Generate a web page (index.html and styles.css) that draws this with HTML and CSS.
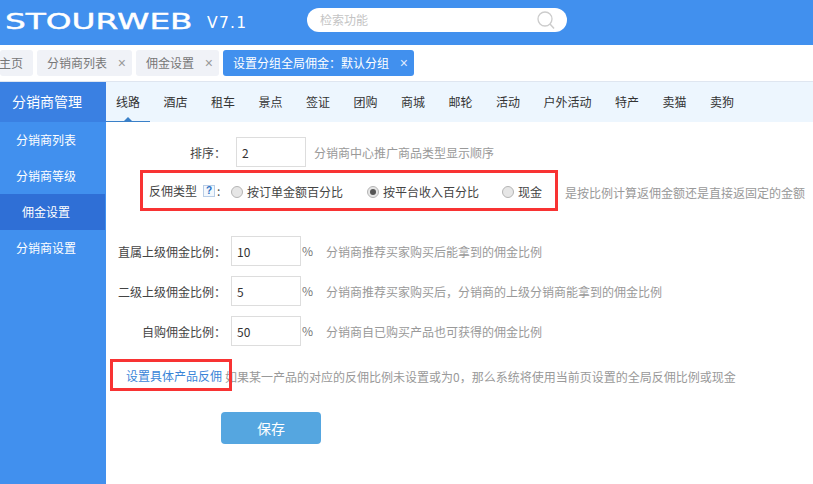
FILE: index.html
```html
<!DOCTYPE html>
<html lang="zh">
<head>
<meta charset="utf-8">
<title>佣金设置</title>
<link rel="stylesheet" href="styles.css">
</head>
<body>
<header class="top">
  <div class="logo"><span class="logo-name">STOURWEB</span><span class="logo-ver">V7.1</span></div>
  <div class="search">
    <span class="search-text">检索功能</span>
    <svg class="search-icon" width="18" height="19" viewBox="0 0 18 19"><circle cx="8" cy="8" r="7" fill="none" stroke="#ccc" stroke-width="1.3"/><path d="M13 13l4 4.5" stroke="#ccc" stroke-width="1.5" fill="none"/></svg>
  </div>
</header>
<div class="tabs">
  <div class="tab tab-home">主页</div>
  <div class="tab">分销商列表<span class="close">×</span></div>
  <div class="tab">佣金设置<span class="close">×</span></div>
  <div class="tab tab-on">设置分组全局佣金：默认分组<span class="close">×</span></div>
</div>
<div class="main">
  <aside class="side">
    <div class="side-title">分销商管理</div>
    <div class="side-item">分销商列表</div>
    <div class="side-item">分销商等级</div>
    <div class="side-item side-on">佣金设置</div>
    <div class="side-item">分销商设置</div>
  </aside>
  <section class="content">
    <nav class="nav">
      <span class="nav-item nav-on">线路</span>
      <span class="nav-item">酒店</span>
      <span class="nav-item">租车</span>
      <span class="nav-item">景点</span>
      <span class="nav-item">签证</span>
      <span class="nav-item">团购</span>
      <span class="nav-item">商城</span>
      <span class="nav-item">邮轮</span>
      <span class="nav-item">活动</span>
      <span class="nav-item">户外活动</span>
      <span class="nav-item">特产</span>
      <span class="nav-item">卖猫</span>
      <span class="nav-item">卖狗</span>
    </nav>
    <div class="form">
      <div class="row row-sort">
        <label class="lab lab-sort">排序：</label>
        <div class="inp inp-sort">2</div>
        <span class="hint">分销商中心推广商品类型显示顺序</span>
      </div>
      <div class="row row-type">
        <label class="lab lab-type">反佣类型<span class="qm">?</span><span class="colon">:</span></label>
        <span class="radio-wrap r1"><span class="radio"></span>按订单金额百分比</span>
        <span class="radio-wrap r2"><span class="radio radio-on"></span>按平台收入百分比</span>
        <span class="radio-wrap r3"><span class="radio"></span>现金</span>
        <span class="hint hint-type">是按比例计算返佣金额还是直接返固定的金额</span>
        <span class="redbox redbox-type"></span>
      </div>
      <div class="row row-rate row-first">
        <label class="lab lab-rate">直属上级佣金比例：</label>
        <div class="inp">10</div><span class="pct">%</span>
        <span class="hint">分销商推荐买家购买后能拿到的佣金比例</span>
      </div>
      <div class="row row-rate">
        <label class="lab lab-rate">二级上级佣金比例：</label>
        <div class="inp">5</div><span class="pct">%</span>
        <span class="hint">分销商推荐买家购买后，分销商的上级分销商能拿到的佣金比例</span>
      </div>
      <div class="row row-rate">
        <label class="lab lab-rate">自购佣金比例：</label>
        <div class="inp">50</div><span class="pct">%</span>
        <span class="hint">分销商自已购买产品也可获得的佣金比例</span>
      </div>
      <div class="row row-link">
        <a class="link">设置具体产品反佣</a>
        <span class="hint hint-link">如果某一产品的对应的反佣比例未设置或为0，那么系统将使用当前页设置的全局反佣比例或现金</span>
        <span class="redbox redbox-link"></span>
      </div>
      <button class="save">保存</button>
    </div>
  </section>
</div>
</body>
</html>
```
FILE: styles.css
```css
* { box-sizing: border-box; }
html, body { margin: 0; height: 100%; }
body {
  width: 813px; height: 484px; overflow: hidden; background: #fff; color: #333;
  font: 12px/1 "Noto Sans CJK SC", "Liberation Sans", sans-serif;
}
.top { height: 45px; background: #4190ee; display: flex; align-items: flex-start; }
.logo { width: 307px; padding-left: 5px; height: 45px; display: flex; color: #fff; white-space: nowrap; }
.logo-name {
  font: 21px/44px "DejaVu Sans", sans-serif; display: block; width: 188px; height: 45px; flex: none;
  transform-origin: 0 50%; transform: scaleX(1.56); -webkit-text-stroke: .4px #fff;
}
.logo-ver { font: 15.5px/47px "DejaVu Sans", sans-serif; margin-left: 14px; display: block; letter-spacing: 1.3px; }
.search {
  width: 260px; height: 24px; margin-top: 8px; background: #fff; border-radius: 12px;
  display: flex; align-items: center; justify-content: space-between; padding: 0 12px 0 13px;
}
.search-text { color: #c4c4c4; font-size: 12px; }
.tabs { height: 37px; border-bottom: 1px solid #dfe6f0; display: flex; gap: 4px; padding-top: 5px; overflow: hidden; }
.tab {
  height: 26px; background: #f0f2f7; border-radius: 3px; color: #777; font-size: 12px; line-height: 26px;
  padding: 0 10px; display: flex; white-space: nowrap;
}
.tab-home { width: 33px; padding: 0; justify-content: flex-end; padding-right: 10px; }
.tab:nth-child(2) { width: 95px; }
.tab:nth-child(3) { width: 83px; }
.tab-on { width: 191px; background: #4190ee; color: #fff; }
.close { margin-left: auto; margin-right: -4px; font-size: 14px; color: #999; font-family: "Liberation Sans", sans-serif; }
.tab-on .close { color: #dfeaff; }
.main { display: flex; height: 402px; }
.side { width: 106px; background: #4190ee; color: #fff; flex: none; }
.side-title { height: 40px; background: #3a80e2; font-size: 14px; line-height: 39px; padding-left: 12px; }
.side-item { height: 36px; line-height: 36px; font-size: 12px; padding-left: 16px; }
.side-on { background: #2f6fd6; width: 105px; padding-left: 22px; }
.content { flex: 1; min-width: 0; }
.nav { height: 40px; background: #edf6fe; display: flex; padding-left: 10px; gap: 23.5px; font-size: 12px; color: #333; }
.nav-item { width: 24px; line-height: 40px; white-space: nowrap; position: relative; flex: none; }
.nav-item:nth-child(10) { width: 48px; }
.nav-on::after {
  content: ""; position: absolute; left: -10px; width: 44px; bottom: 0; height: 1px; background: #3a80c8;
}
.nav-on::before {
  content: ""; position: absolute; left: 8px; bottom: 1px; border: 4px solid transparent; border-top: 0; border-bottom-color: #3a80c8;
}
.form { display: flex; flex-direction: column; }
.row { display: flex; align-items: center; position: relative; white-space: nowrap; }
.lab { text-align: right; color: #444; flex: none; padding-top: 2px; }
.inp {
  height: 30px; border: 1px solid #ddd; color: #333; font-size: 12px; line-height: 30px; padding-left: 5px; flex: none; width: 70px;
}
.hint { color: #999; font-size: 12px; padding-top: 2px; }
.row-sort { height: 30px; margin-top: 15px; }
.lab-sort { width: 130px; padding-right: 10px; }
.inp-sort { margin-right: 8px; }
.row-type { height: 40px; margin-top: 3px; font-size: 12px; }
.lab-type { margin-left: 43px; width: 82px; text-align: left; display: flex; align-items: center; padding-top: 2px; }
.qm {
  display: block; width: 12px; height: 12px; border: 1px solid #b8cde6; color: #2a6fc4; font: bold 10px/10px "Liberation Sans", sans-serif;
  text-align: center; background: #f3f8fd; margin-left: 6px;
}
.colon { margin-left: 2px; }
.radio-wrap { display: flex; align-items: center; color: #444; gap: 4px; flex: none; padding-top: 3px; }
.r1 { width: 136px; }
.r2 { width: 135px; }
.r3 { width: 60px; }
.radio {
  width: 12px; height: 12px; border-radius: 50%; border: 1px solid #b5b5b5; background: #e6e6e6; flex: none; position: relative;
}
.radio-on::after { content: ""; position: absolute; left: 2px; top: 2px; width: 6px; height: 6px; border-radius: 50%; background: #555; }
.redbox { position: absolute; border: 3px solid #f83333; pointer-events: none; }
.redbox-type { left: 34px; top: 0; width: 418px; height: 41px; }
.redbox-link { left: 4px; top: 0; width: 122px; height: 32px; }
.hint-type { margin-left: 3px; padding-top: 5px; }
.row-rate { height: 30px; margin-bottom: 10px; }
.row-first { margin-top: 26px; }
.lab-rate { width: 125px; padding-right: 5px; }
.pct { color: #777; margin: 0 13px 0 1px; width: 11px; }
.row-link { height: 32px; margin-top: 3px; }
.link { color: #3a85d8; margin-left: 20px; margin-right: 3px; padding-top: 2px; }
.hint-link { padding-top: 4px; }
.save {
  width: 100px; height: 32px; margin: 21px 0 0 115px; background: #55a6e0; color: #fff; border: 0; border-radius: 4px;
  font: 14px "Noto Sans CJK SC", sans-serif;
}
```
